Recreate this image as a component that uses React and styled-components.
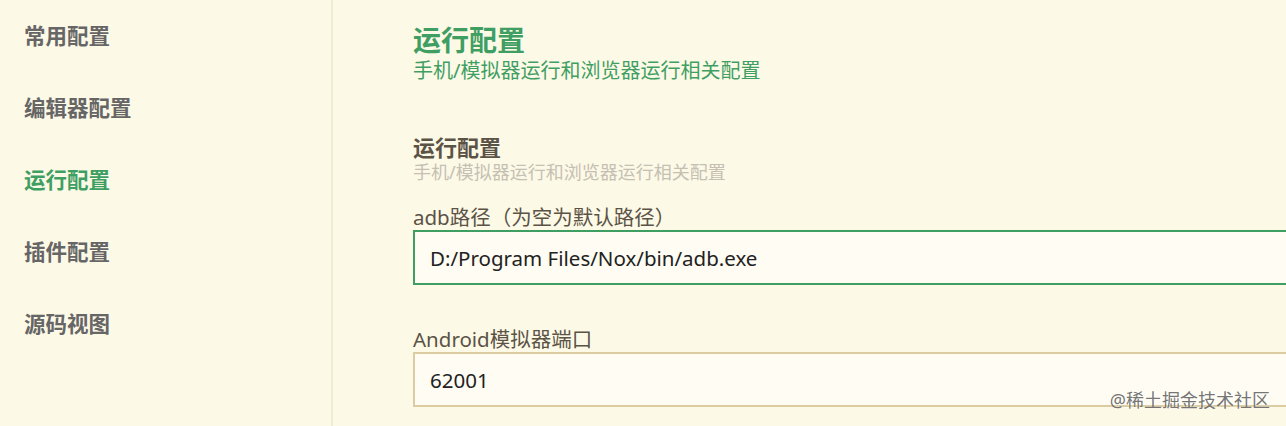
import styled, {createGlobalStyle} from "styled-components";

const GlobalStyle = createGlobalStyle`
  html, body {
    margin: 0;
    padding: 0;
    height: 100%;
    overflow: hidden;
    background: #fdf9e7;
  }
  body {
    font-family: "Noto Sans", "Noto Sans CJK SC", sans-serif;
  }
`;

const GREEN = "#3f9f63";

const Page = styled.div`
  display: flex;
  height: 100vh;
  overflow: hidden;
  position: relative;
`;

const Sidebar = styled.nav`
  width: 333px;
  flex-shrink: 0;
  border-right: 2px solid #f1ebd3;
  box-sizing: border-box;
`;

const NavItem = styled.div`
  padding-left: 24px;
  font-size: 21.5px;
  font-weight: 700;
  line-height: 72px;
  color: ${p => (p.$active ? GREEN : "#666")};
  cursor: pointer;
`;

const Main = styled.main`
  flex: 1;
  padding: 24px 0 0 80px;
  min-width: 0;
`;

const Title = styled.h1`
  margin: 0;
  font-size: 28px;
  line-height: 32px;
  font-weight: 700;
  color: ${GREEN};
`;

const Subtitle = styled.div`
  margin-top: 3px;
  font-size: 20px;
  line-height: 24px;
  color: ${GREEN};
`;

const Section = styled.section`
  margin-top: 51px;
`;

const SectionTitle = styled.h2`
  margin: 0;
  font-size: 22px;
  line-height: 26px;
  font-weight: 700;
  color: #5b5346;
`;

const SectionDesc = styled.div`
  margin-top: 2px;
  font-size: 18px;
  line-height: 20px;
  color: #c5c0b2;
`;

const Field = styled.div`
  margin-top: ${p => p.$gap}px;
`;

const Label = styled.label`
  display: block;
  font-size: 20.5px;
  line-height: 26px;
  color: #5b5346;
`;

const Input = styled.input`
  display: block;
  box-sizing: border-box;
  width: 960px;
  height: 55px;
  padding: 0 15px;
  border: 2px solid ${p => (p.$focused ? GREEN : "#dccca2")};
  background: #fffdf3;
  font-family: "Noto Sans", "Noto Sans CJK SC", sans-serif;
  font-size: 20.5px;
  color: #222;
  outline: none;
`;

const Watermark = styled.div`
  position: absolute;
  right: 16px;
  bottom: 14px;
  font-size: 18px;
  color: rgba(80, 80, 80, 0.8);
  text-shadow: 0 0 2px rgba(255, 255, 255, 0.8);
  pointer-events: none;
`;

const navItems = ["常用配置", "编辑器配置", "运行配置", "插件配置", "源码视图"];

export default function App() {
    return (
        <>
            <GlobalStyle/>
            <Page>
                <Sidebar>
                    {navItems.map(item => (
                        <NavItem key={item} $active={item === "运行配置"}>{item}</NavItem>
                    ))}
                </Sidebar>
                <Main>
                    <Title>运行配置</Title>
                    <Subtitle>手机/模拟器运行和浏览器运行相关配置</Subtitle>
                    <Section>
                        <SectionTitle>运行配置</SectionTitle>
                        <SectionDesc>手机/模拟器运行和浏览器运行相关配置</SectionDesc>
                        <Field $gap={22}>
                            <Label>adb路径（为空为默认路径）</Label>
                            <Input $focused defaultValue="D:/Program Files/Nox/bin/adb.exe"/>
                        </Field>
                        <Field $gap={41}>
                            <Label>Android模拟器端口</Label>
                            <Input defaultValue="62001"/>
                        </Field>
                    </Section>
                </Main>
                <Watermark>@稀土掘金技术社区</Watermark>
            </Page>
        </>
    );
}
